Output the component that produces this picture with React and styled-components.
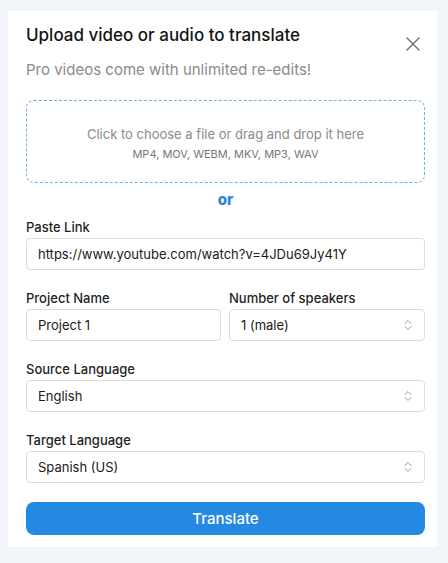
import React from "react";
import styled, { createGlobalStyle } from "styled-components";

const GlobalStyle = createGlobalStyle`
  html, body {
    margin: 0;
    padding: 0;
    background: #f2f6fb;
    font-family: Inter, "Noto Sans", sans-serif;
  }
  * {
    box-sizing: border-box;
  }
`;

const Page = styled.div`
  width: 448px;
  height: 563px;
  padding: 11px 11px 0 8px;
`;

const Card = styled.div`
  background: #ffffff;
  padding: 12px 12px 12px 18px;
  display: flex;
  flex-direction: column;
`;

const Header = styled.div`
  display: flex;
  justify-content: space-between;
  align-items: flex-start;
`;

const Title = styled.h2`
  margin: 0;
  font-size: 17px;
  line-height: 24px;
  font-weight: 500;
  color: #141414;
`;

const CloseButton = styled.button`
  border: none;
  background: none;
  padding: 0;
  margin: 14px 5px 0 0;
  width: 14px;
  height: 14px;
  display: flex;
  cursor: pointer;
`;

const Subtitle = styled.p`
  margin: 9px 0 0;
  font-size: 15px;
  line-height: 20px;
  color: #8a8a8a;
`;

const Dropzone = styled.div`
  margin: 20px 0 0;
  width: 399px;
  height: 83px;
  border: 1px dashed #6fb1e3;
  border-radius: 8px;
  padding-top: 23px;
  display: flex;
  flex-direction: column;
  align-items: center;
`;

const DropMain = styled.div`
  font-size: 13px;
  line-height: 20px;
  color: #8a8a8a;
`;

const DropFormats = styled.div`
  margin-top: 2px;
  font-size: 11px;
  line-height: 16px;
  color: #777;
`;

const Or = styled.div`
  width: 399px;
  margin-top: 7px;
  text-align: center;
  font-size: 15px;
  line-height: 20px;
  font-weight: 800;
  color: #2a86d8;
`;

const Form = styled.div`
  width: 399px;
  margin-top: 8px;
  display: flex;
  flex-direction: column;
  gap: 19px;
`;

const Row = styled.div`
  display: grid;
  grid-template-columns: 195px 196px;
  gap: 8px;
`;

const Field = styled.label`
  display: flex;
  flex-direction: column;
  gap: 2px;
`;

const Label = styled.span`
  font-size: 13px;
  line-height: 18px;
  font-weight: 500;
  color: #1f1f1f;
`;

const Box = styled.div`
  height: 32px;
  border: 1px solid #dcdcdc;
  border-radius: 4px;
  padding: 0 12px 0 11px;
  display: flex;
  align-items: center;
  justify-content: space-between;
  font-size: 13px;
  color: #1a1a1a;
  background: #fff;
`;

const Button = styled.button`
  height: 33px;
  border: none;
  border-radius: 8px;
  background: #2589e3;
  color: #fff;
  font-family: inherit;
  font-size: 15px;
  font-weight: 500;
  cursor: pointer;
`;

const Chevrons = () => (
  <svg width="8" height="12" viewBox="0 0 8 12" fill="none" stroke="#9a9a9a" strokeWidth="1" strokeLinecap="round" strokeLinejoin="round">
    <path d="M1 4.5 L4 1.5 L7 4.5" />
    <path d="M1 7.5 L4 10.5 L7 7.5" />
  </svg>
);

const SelectBox = ({ value }) => (
  <Box>
    <span>{value}</span>
    <Chevrons />
  </Box>
);

export default function App() {
  return (
    <>
      <GlobalStyle />
      <Page>
        <Card>
          <Header>
            <Title>Upload video or audio to translate</Title>
            <CloseButton aria-label="Close">
              <svg width="14" height="14" viewBox="0 0 14 14" stroke="#6b6b6b" strokeWidth="1.4" strokeLinecap="round">
                <path d="M1 1 L13 13 M13 1 L1 13" />
              </svg>
            </CloseButton>
          </Header>
          <Subtitle>Pro videos come with unlimited re-edits!</Subtitle>
          <Dropzone>
            <DropMain>Click to choose a file or drag and drop it here</DropMain>
            <DropFormats>MP4, MOV, WEBM, MKV, MP3, WAV</DropFormats>
          </Dropzone>
          <Or>or</Or>
          <Form>
            <Field>
              <Label>Paste Link</Label>
              <Box>https://www.youtube.com/watch?v=4JDu69Jy41Y</Box>
            </Field>
            <Row>
              <Field>
                <Label>Project Name</Label>
                <Box>Project 1</Box>
              </Field>
              <Field>
                <Label>Number of speakers</Label>
                <SelectBox value="1 (male)" />
              </Field>
            </Row>
            <Field>
              <Label>Source Language</Label>
              <SelectBox value="English" />
            </Field>
            <Field>
              <Label>Target Language</Label>
              <SelectBox value="Spanish (US)" />
            </Field>
            <Button>Translate</Button>
          </Form>
        </Card>
      </Page>
    </>
  );
}
